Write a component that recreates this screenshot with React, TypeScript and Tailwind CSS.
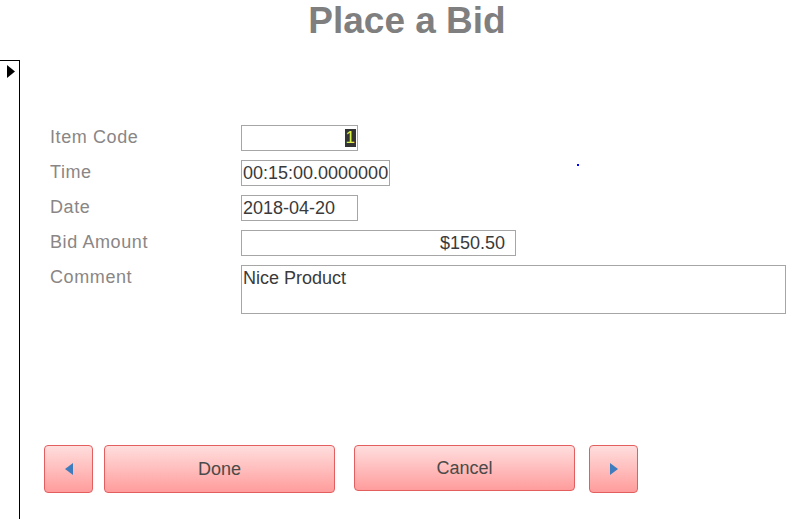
import React from "react";

const Field = ({
  label,
  width,
  height = 26,
  children,
  align = "left",
}: {
  label: string;
  width: number;
  height?: number;
  children?: React.ReactNode;
  align?: "left" | "right";
}) => (
  <div className="flex items-start">
    <div className="w-[191px] shrink-0 text-[18px] leading-[24px] tracking-[0.6px] text-[#8a8686]">
      {label}
    </div>
    <div
      className={
        "border border-[#a6a6a6] text-[18px] leading-[24px] text-[#3a3a3a] whitespace-nowrap overflow-hidden flex " +
        (align === "right" ? "justify-end" : "justify-start")
      }
      style={{ width, height }}
    >
      {children}
    </div>
  </div>
);

const Btn = ({
  w,
  h = 48,
  children,
}: {
  w: number;
  h?: number;
  children: React.ReactNode;
}) => (
  <button
    className="shrink-0 rounded-[4px] border border-[#e35e5e] bg-gradient-to-b from-[#ffdede] to-[#ff9c9c] flex items-center justify-center text-[18px] text-[#4a4a4a]"
    style={{ width: w, height: h }}
  >
    {children}
  </button>
);

export default function App() {
  return (
    <div
      className="w-[796px] h-[519px] bg-white flex flex-col overflow-hidden relative"
      style={{ fontFamily: '"Liberation Sans", Arial, sans-serif' }}
    >
      <div className="h-[60px] shrink-0 flex justify-center pl-[18px]">
        <h1 className="text-[37px] leading-[42px] font-bold text-[#7f7f7f]">Place a Bid</h1>
      </div>
      <div className="flex flex-1">
        <div className="w-[20px] shrink-0 border-t border-r border-black relative">
          <svg className="absolute left-[7px] top-[4px]" width="8" height="13" viewBox="0 0 8 13">
            <polygon points="0,0 8,6.5 0,13" fill="#000" />
          </svg>
        </div>
        <div className="flex-1 flex flex-col">
          <div className="ml-[30px] mt-[65px] flex flex-col gap-[9px]">
            <Field label="Item Code" width={117} align="right">
              <span className="bg-[#333333] text-[#e2f04a] h-[18px] mt-[3px] mr-[1px] px-[1px] leading-[18px] text-[17px]">1</span>
            </Field>
            <Field label="Time" width={149}>
              <span className="pl-[1px]">00:15:00.0000000</span>
            </Field>
            <Field label="Date" width={117}>
              <span className="pl-[1px]">2018-04-20</span>
            </Field>
            <Field label="Bid Amount" width={275} align="right">
              <span className="pr-[10px]">$150.50</span>
            </Field>
            <Field label="Comment" width={545} height={49}>
              <span className="pl-[1px]">Nice Product</span>
            </Field>
          </div>
          <div className="ml-[24px] mt-[131px] flex items-start">
            <Btn w={49}>
              <svg width="8" height="12" viewBox="0 0 8 12">
                <polygon points="8,0 0,6 8,12" fill="#3f7cbd" />
              </svg>
            </Btn>
            <div className="w-[11px]" />
            <Btn w={231}>Done</Btn>
            <div className="w-[19px]" />
            <Btn w={221} h={46}>Cancel</Btn>
            <div className="w-[14px]" />
            <Btn w={49}>
              <svg width="8" height="12" viewBox="0 0 8 12">
                <polygon points="0,0 8,6 0,12" fill="#3f7cbd" />
              </svg>
            </Btn>
          </div>
        </div>
      </div>
      <div className="absolute left-[577px] top-[164px] w-[2px] h-[2px] bg-[#0000ff]" />
    </div>
  );
}
